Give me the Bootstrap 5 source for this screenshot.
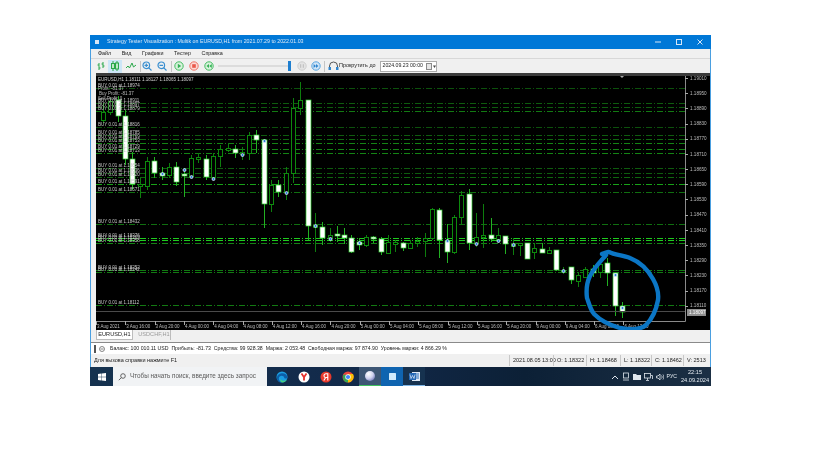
<!DOCTYPE html>
<html lang="ru"><head><meta charset="utf-8"><title>Strategy Tester</title>
<link href="https://cdn.jsdelivr.net/npm/bootstrap@5.3.0/dist/css/bootstrap.min.css" rel="stylesheet">
<style>
body{background:#fff;margin:0;font-family:"Liberation Sans",Arial,sans-serif;color:#222;font-size:5.4px;line-height:1}
.shot{padding:35px 0 0 90px;width:819px;height:460px;overflow:hidden;filter:blur(.35px)}
.mtwin{width:621px;height:332px;background:#f0f0f0;border-left:1px solid #4a9fe0;border-right:1px solid #4a9fe0}
.tbar{height:14px;background:#0078d7;color:#dbe9f7;margin:0 -1px;padding:0 7px 0 5px}
.tbar .ttl{font-size:5.25px}
.tico{width:4px;height:4px;background:#d6e6f6;margin-right:8px}
.wbtn{width:8px;height:8px}
.wgap{margin-left:13px}
.mbar{height:10px;padding-left:7px;gap:10.5px;border-bottom:1px solid #d8d8d8;font-size:5.4px}
.tools{height:14px;padding-left:3px}
.tbtn{width:14px;height:13px;flex:none}
.tbtn.on{background:#cde6f7}
.tbtn.nr{width:12px}
.tsep{width:1px;height:11px;background:#c4c4c4;flex:none}
.m1{margin-left:1px}.m2{margin-left:2px}.m3{margin-left:3px}.m5{margin-left:5px}
.track{width:70px;height:2px;background:#dcdcdc;flex:none}
.thumb{width:3px;height:10px;background:#1f7fd0;flex:none}
.dbox{width:57px;height:11px;background:#fff;border:1px solid #adadad;padding-left:2px;font-size:5.2px;margin-left:4px}
.scrolltxt{font-size:5.45px;white-space:nowrap}
.mchart{display:block;background:#000;margin-left:5px;border-top:3px solid #3b3b3b;width:614px;height:257px;flex:none}
.tabsrow{height:12px;padding-left:5px;gap:5px;font-size:5.6px}
.mtab{height:10px;width:37px;background:#fff;border:1px solid #bcbcbc;border-top:0}
.mtab.off{width:33px;background:#f0f0f0;color:#9a9a9a;border:0;border-right:1px solid #bcbcbc}
.jrow{height:12px;background:#fff;border-top:1px solid #8a8a8a;font-size:5.2px;padding-left:3px;gap:3px}
.jrow .bal{margin-left:2px}
.grip{width:2px;height:8px;background:#555}
.sbar{height:13px;font-size:5.5px;padding-left:3px}
.scell{height:11px;border-left:1px solid #c8c8c8;padding-left:3px;flex:none;white-space:nowrap}
.cw1{width:44px}.cw2{width:33px}.cw3{width:34px}.cw4{width:31px}.cw5{width:32px}.cw6{width:27px}
.tkbar{width:621px;height:19px;background:linear-gradient(90deg,#15324f 0,#12294a 45%,#0c2036 70%,#1b2f44 100%);color:#e6edf3}
.srch{width:154px;height:19px;margin-left:3px;background:#f1f3f5;color:#5a5a5a;font-size:6.35px;padding-left:5px;gap:4px;flex:none;white-space:nowrap}
.tkit{width:22px;height:19px;flex:none}
.tkit.act{background:#3d5674;border-bottom:1px solid #3fbf5f}
.tkit.blu{background:#0f64b0}
.tkit.wrd{background:#16324f;border-bottom:1px solid #7fb6e6}
.wlogo{width:17px;height:19px;margin-left:3px;flex:none}
.tray{gap:3px;font-size:5.2px;padding-right:2px}
.clock{font-size:5.6px;line-height:7.5px;text-align:center;margin-left:1px}
</style></head>
<body>
<div class="shot">
 <div class="mtwin d-flex flex-column">
  <div class="tbar d-flex align-items-center">
   <span class="tico"></span><span class="ttl flex-grow-1">Strategy Tester Visualization : Multik on EURUSD,H1 from 2021.07.29 to 2022.01.03</span>
   <svg class="wbtn" viewBox="0 0 8 8"><path d="M1 4h6" stroke="#d6e6f6"/></svg>
   <svg class="wbtn wgap" viewBox="0 0 8 8"><rect x="1.5" y="1.5" width="5" height="5" fill="none" stroke="#d6e6f6"/></svg>
   <svg class="wbtn wgap" viewBox="0 0 8 8"><path d="M1.500 1.500l5 5M6.500 1.500l-5 5" stroke="#d6e6f6"/></svg>
  </div>
  <div class="mbar d-flex align-items-center"><span>Файл</span><span>Вид</span><span>Графики</span><span>Тестер</span><span>Справка</span></div>
  <div class="tools d-flex align-items-center">
   <span class="tbtn d-flex align-items-center justify-content-center"><svg width="10" height="10" viewBox="0 0 10 10" fill="none" stroke="#2aa84a"><path d="M3 2v7M1.500 4h1.500M3 7h1.500M7 1v6M5.500 3H7M7 5h1.500"/></svg></span>
   <span class="tbtn on d-flex align-items-center justify-content-center"><svg width="10" height="10" viewBox="0 0 10 10" fill="none" stroke="#2aa84a"><path d="M3 0v10M7 0v10"/><rect x="1.500" y="2.500" width="3" height="5" fill="#bfe8c8"/><rect x="5.500" y="2" width="3" height="6" fill="#bfe8c8"/></svg></span>
   <span class="tbtn m2 d-flex align-items-center justify-content-center"><svg width="10" height="8" viewBox="0 0 10 8" fill="none" stroke="#2aa84a"><path d="M0 6l2-2 1.500 2L6 1l1.500 4L10 3"/></svg></span>
   <span class="tsep m2"></span>
   <span class="tbtn nr d-flex align-items-center justify-content-center"><svg width="10" height="10" viewBox="0 0 10 10" fill="none" stroke="#3a8fd0" stroke-width="1.200"><circle cx="4.300" cy="4.300" r="3.300"/><path d="M6.800 6.800L9.500 9.500M2.500 4.300h3.600M4.300 2.500v3.600"/></svg></span>
   <span class="tbtn nr m3 d-flex align-items-center justify-content-center"><svg width="10" height="10" viewBox="0 0 10 10" fill="none" stroke="#3a8fd0" stroke-width="1.200"><circle cx="4.300" cy="4.300" r="3.300"/><path d="M6.800 6.800L9.500 9.500M2.500 4.300h3.600"/></svg></span>
   <span class="tsep m3"></span>
   <span class="tbtn nr m1 d-flex align-items-center justify-content-center"><svg width="10" height="10" viewBox="0 0 10 10"><circle cx="5" cy="5" r="4.200" fill="#d8f2dc" stroke="#45bd62"/><path d="M3.800 2.800v4.400L7.200 5z" fill="#35b156"/></svg></span>
   <span class="tbtn nr m3 d-flex align-items-center justify-content-center"><svg width="10" height="10" viewBox="0 0 10 10"><circle cx="5" cy="5" r="4.200" fill="#fbd8d4" stroke="#ee7468"/><rect x="3.200" y="3.200" width="3.600" height="3.600" fill="#e9584a"/></svg></span>
   <span class="tbtn nr m3 d-flex align-items-center justify-content-center"><svg width="10" height="10" viewBox="0 0 10 10"><circle cx="5" cy="5" r="4.200" fill="#d8f2dc" stroke="#45bd62"/><path d="M5 3v4L2.500 5zM7.800 3v4L5.300 5z" fill="#35b156"/></svg></span>
   <span class="track m3"></span><span class="thumb"></span>
   <span class="tbtn nr m5 d-flex align-items-center justify-content-center"><svg width="10" height="10" viewBox="0 0 10 10"><circle cx="5" cy="5" r="4.200" fill="#e4e4e4" stroke="#cfcfcf"/><path d="M3.700 3.200v3.600M6.300 3.200v3.600" stroke="#bbb"/></svg></span>
   <span class="tbtn nr m2 d-flex align-items-center justify-content-center"><svg width="10" height="10" viewBox="0 0 10 10"><circle cx="5" cy="5" r="4.200" fill="#cfe4f6" stroke="#5aa6e0"/><path d="M2.600 3v4L5 5zM5 3v4L7.400 5z" fill="#2f86cf"/></svg></span>
   <span class="tsep m2"></span>
   <svg class="m3 flex-shrink-0" width="11" height="10" viewBox="0 0 11 10" fill="none"><path d="M1.500 7V5a4 4 0 0 1 8 0v2" stroke="#555"/><rect x=".5" y="6" width="2.500" height="3" fill="#2f86cf"/><rect x="8" y="6" width="2.500" height="3" fill="#2f86cf"/></svg>
   <span class="scrolltxt">Прокрутить до</span>
   <span class="dbox d-flex align-items-center"><span class="flex-grow-1">2024.09.23 00:00</span>
    <svg width="10" height="7" viewBox="0 0 10 7"><rect x=".5" y=".5" width="5" height="6" fill="#e6e6e6" stroke="#8a8a8a"/><path d="M7 2.500h3L8.500 5z" fill="#444"/></svg></span>
  </div>
  <svg class="mchart" id="chart" viewBox="96 76 614 254" font-family="Liberation Sans, Arial, sans-serif"></svg>
  <div class="tabsrow d-flex align-items-start"><span class="mtab d-flex align-items-center justify-content-center">EURUSD,H1</span><span class="mtab off d-flex align-items-center justify-content-center">USDCHF,H1</span></div>
  <div class="jrow d-flex align-items-center"><span class="grip"></span>
   <svg width="6" height="6" viewBox="0 0 6 6" fill="none" stroke="#555" stroke-width=".7"><circle cx="3" cy="3" r="2.500"/><path d="M1.500 3h3"/></svg>
   <span class="bal">Баланс: 100 010.11 USD&nbsp; Прибыль: -81.73&nbsp; Средства: 99 928.38&nbsp; Маржа: 2 053.48&nbsp; Свободная маржа: 97 874.90&nbsp; Уровень маржи: 4 866.29 %</span></div>
  <div class="sbar d-flex align-items-center"><span class="flex-grow-1">Для вызова справки нажмите F1</span>
   <span class="scell d-flex align-items-center cw1">2021.08.05 13:00</span><span class="scell d-flex align-items-center cw2">O: 1.18322</span><span class="scell d-flex align-items-center cw3">H: 1.18468</span><span class="scell d-flex align-items-center cw4">L: 1.18322</span><span class="scell d-flex align-items-center cw5">C: 1.18462</span><span class="scell d-flex align-items-center cw6">V: 2513</span></div>
 </div>
 <div class="tkbar d-flex align-items-center">
  <span class="wlogo d-flex align-items-center justify-content-center"><svg width="8" height="8" viewBox="0 0 8 8" fill="#fff"><path d="M0 1.100l3.400-.5v3.200H0zM3.800.5L8 0v3.800H3.800zM0 4.200h3.400v3.200L0 6.900zM3.800 4.200H8V8l-4.200-.6z"/></svg></span>
  <div class="srch d-flex align-items-center"><svg width="8" height="8" viewBox="0 0 8 8" fill="none" stroke="#444" stroke-width=".8"><circle cx="5" cy="3" r="2.300"/><path d="M3.300 4.700L.8 7.200"/></svg><span>Чтобы начать поиск, введите здесь запрос</span></div>
  <span class="tkit ms-1 d-flex align-items-center justify-content-center"><svg width="12" height="12" viewBox="0 0 12 12"><circle cx="6" cy="6" r="5.500" fill="#1b9de2"/><path d="M.8 7A5.500 5.500 0 0 1 11.500 6c0 1.500-2 2-3 1.200C8 4 3 3.800 2.800 7.500 2.700 9.500 4.500 11 6 11.500 3 11.500 1 9.500.8 7z" fill="#0c5ea8"/><path d="M4 8c1.500 2 4.500 2.500 7 .5-1 2-3 3-5 3-1.200-.6-2-2-2-3.500z" fill="#47d17a"/></svg></span>
  <span class="tkit d-flex align-items-center justify-content-center"><svg width="12" height="12" viewBox="0 0 12 12"><circle cx="6" cy="6" r="5.500" fill="#fff"/><path d="M3.500 2.500L6 6.200l2.500-3.700M6 6v3.500" fill="none" stroke="#e5322d" stroke-width="1.800"/></svg></span>
  <span class="tkit d-flex align-items-center justify-content-center"><svg width="12" height="12" viewBox="0 0 12 12"><circle cx="6" cy="6" r="5.500" fill="#e8392c"/><path d="M7.800 9.500V2.700H6.200C4.800 2.700 4 3.500 4 4.700c0 1 .6 1.700 1.500 2L3.800 9.500M7.800 6.500H6" fill="none" stroke="#fff" stroke-width="1.100"/></svg></span>
  <span class="tkit d-flex align-items-center justify-content-center"><svg width="12" height="12" viewBox="0 0 12 12"><circle cx="6" cy="6" r="5.500" fill="#e8453c"/><path d="M6 6L1.200 8.800A5.500 5.500 0 0 0 6 11.500z" fill="#34a853"/><path d="M6 6l4.800 2.800A5.500 5.500 0 0 1 6 11.500zM6 3h5a5.500 5.500 0 0 1-.2 5.800L6 6z" fill="#fbbc05"/><path d="M1.200 8.800L6 6 3.500 3.500 1 4z" fill="#34a853"/><circle cx="6" cy="6" r="2.700" fill="#fff"/><circle cx="6" cy="6" r="2.100" fill="#4285f4"/></svg></span>
  <span class="tkit act d-flex align-items-center justify-content-center"><svg width="12" height="12" viewBox="0 0 12 12"><defs><radialGradient id="sph" cx=".35" cy=".3" r=".8"><stop offset="0" stop-color="#fff"/><stop offset=".55" stop-color="#cfd2ee"/><stop offset="1" stop-color="#6f74b8"/></radialGradient></defs><circle cx="6" cy="6" r="5" fill="url(#sph)"/></svg></span>
  <span class="tkit blu d-flex align-items-center justify-content-center"><svg width="7" height="7" viewBox="0 0 7 7"><rect width="7" height="7" rx=".6" fill="#cfeafc"/></svg></span>
  <span class="tkit wrd d-flex align-items-center justify-content-center"><svg width="11" height="11" viewBox="0 0 11 11"><rect x="3" y="1" width="8" height="9" fill="#dfe9f5"/><path d="M6 3h4M6 5h4M6 7h4" stroke="#2b6fb8"/><rect y="2" width="7" height="7" fill="#2468b5"/><path d="M1 3.500l1 4 1.500-3 1.500 3 1-4" fill="none" stroke="#fff" stroke-width=".6"/></svg></span>
  <span class="flex-grow-1"></span>
  <div class="tray d-flex align-items-center">
   <svg width="8" height="6" viewBox="0 0 8 6" fill="none" stroke="#dfe6ee"><path d="M1 5l3-3 3 3"/></svg>
   <svg width="8" height="9" viewBox="0 0 8 9" fill="none" stroke="#dfe6ee" stroke-width=".8"><rect x="1.500" y="1" width="5" height="5"/><path d="M1 8h6"/></svg>
   <svg width="8" height="7" viewBox="0 0 8 7" fill="#dfe6ee"><path d="M0 1h3l1 1h4v5H0z"/></svg>
   <svg width="9" height="8" viewBox="0 0 9 8" fill="none" stroke="#dfe6ee" stroke-width=".8"><rect x=".5" y=".5" width="6" height="4.500"/><path d="M3.500 5v2M2 7.500h3M7 2.500h1.500V6"/></svg>
   <svg width="8" height="8" viewBox="0 0 8 8" fill="none" stroke="#dfe6ee" stroke-width=".8"><path d="M.5 3h1.500l2-2v6l-2-2H.5zM5.500 2.500c.8 1 .8 2 0 3M7 1.500c1.200 1.500 1.200 3.500 0 5"/></svg>
   <span>РУС</span>
   <div class="clock">22:15<br>24.09.2024</div>
  </div>
 </div>
</div>
<script src="https://cdn.jsdelivr.net/npm/bootstrap@5.3.0/dist/js/bootstrap.bundle.min.js"></script>
<script>
// x, wickTop, wickBottom, bodyTop, bodyBottom, kind (w = white body, o = outline)
var candles=[[103,103,123,112,120,'o'],[110,98,115,101,112,'o'],[118,96,122,100,116,'w'],[125,110,165,116,159,'w'],[132,152,190,159,184,'w'],[140,178,198,184,186,'o'],[147,157,190,161,186,'o'],[154,157,178,161,173,'w'],[162,167,180,173,176,'w'],[169,163,178,167,175,'o'],[176,162,186,167,182,'w'],[184,168,197,174,176,'w'],[191,155,178,158,176,'o'],[198,153,163,157,159,'o'],[206,155,180,159,177,'w'],[213,153,180,156,177,'o'],[220,145,167,149,156,'o'],[228,143,152,148,150,'o'],[235,145,158,149,153,'w'],[242,147,160,152,154,'o'],[249,132,160,135,153,'o'],[256,130,153,135,140,'w'],[264,140,228,140,204,'w'],[271,180,212,185,204,'o'],[278,180,197,185,192,'w'],[286,167,200,173,192,'o'],[293,98,183,108,173,'o'],[300,82,115,100,108,'o'],[308,100,240,100,226,'w'],[315,213,252,225,227,'o'],[322,222,245,227,238,'w'],[330,228,242,235,238,'o'],[337,226,242,234,236,'w'],[344,228,244,235,238,'w'],[351,235,253,238,252,'w'],[359,238,250,242,245,'w'],[366,235,247,237,245,'o'],[373,236,243,237,239,'w'],[381,237,255,239,252,'w'],[388,235,254,242,253,'o'],[395,240,252,242,244,'o'],[403,242,251,243,248,'w'],[410,240,249,243,248,'o'],[417,237,247,241,243,'o'],[425,233,257,238,241,'o'],[432,208,240,209,238,'o'],[439,208,258,210,240,'w'],[447,224,263,241,252,'w'],[454,215,254,217,252,'o'],[461,191,225,195,217,'o'],[469,189,250,194,243,'w'],[476,213,247,237,243,'o'],[483,204,248,235,237,'o'],[491,218,242,235,239,'w'],[498,228,243,235,239,'o'],[505,236,254,236,244,'w'],[513,238,255,244,246,'o'],[520,243,256,243,245,'o'],[527,243,259,243,259,'w'],[534,243,259,248,252,'o'],[542,243,253,249,253,'w'],[549,247,254,250,253,'o'],[556,250,271,250,270,'w'],[563,267,274,270,272,'o'],[571,267,284,267,280,'w'],[578,272,287,275,281,'o'],[585,267,278,269,277,'o'],[593,265,277,269,273,'w'],[600,258,278,264,272,'o'],[607,258,286,263,273,'w'],[615,273,316,273,306,'w'],[622,302,318,306,312,'w']];
var markers=[[162,174],[184,170],[191,177],[213,179],[242,155],[264,141],[286,193],[315,226],[330,239],[359,243],[447,241],[476,244],[498,241],[513,245],[563,271],[615,275],[622,308]];
// y, opacity, label
var lines=[[88,.4,'1.18974'],[103,.45,'1.18911'],[107,.45,'1.18897'],[111,.6,'1.18879'],[127,.4,'1.18816'],[135,.45,'1.18785'],[139,.5,'1.18769'],[143,.65,'1.18753'],[149,.65,'1.18729'],[153,.65,'1.18713'],[168,.45,'1.18654'],[173,.45,'1.18636'],[177,.5,'1.18620'],[184,.8,'1.18591'],[192,.55,'1.18571'],[224,.55,'1.18432'],[238,1,'1.18376'],[240,1,'1.18369'],[243,.65,'1.18358'],[270,.6,'1.18252'],[272,.6,'1.18242'],[305,.6,'1.18112']];
var days=['3 Aug 2021','3 Aug 16:00','3 Aug 20:00','4 Aug 00:00','4 Aug 04:00','4 Aug 08:00','4 Aug 12:00','4 Aug 16:00','4 Aug 20:00','5 Aug 00:00','5 Aug 04:00','5 Aug 08:00','5 Aug 12:00','5 Aug 16:00','5 Aug 20:00','6 Aug 00:00','6 Aug 04:00','6 Aug 08:00','6 Aug 12:00'];
var s='';
function t(x,y,c,f,str){return '<text x="'+x+'" y="'+y+'" fill="'+f+'" font-size="'+c+'">'+str+'</text>';}
lines.forEach(function(l){s+='<path d="M96 '+(l[0]+.5)+'H685" stroke="#1ecb1e" stroke-opacity="'+l[1]+'" stroke-dasharray="6 2 1 2"/>';});
candles.forEach(function(c){var x=c[0]+.5,w=c[5]=='w',col=w?'#22b022':'#0d7d0d';
 s+='<path d="M'+x+' '+c[1]+'V'+c[2]+'" stroke="'+col+'"/>';
 if(w) s+='<rect x="'+(x-2.5)+'" y="'+c[3]+'" width="5" height="'+Math.max(1,c[4]-c[3])+'" fill="#fff" stroke="#2fd02f" stroke-width=".7"/>';
 else s+='<rect x="'+(x-2)+'" y="'+(c[3]+.5)+'" width="4" height="'+Math.max(1,c[4]-c[3])+'" fill="#000" stroke="#0d8a0d"/>';});
markers.forEach(function(m){s+='<circle cx="'+(m[0]+.5)+'" cy="'+m[1]+'" r="1.500" fill="#2f7fd6" stroke="#dcebfa" stroke-width=".8"/>';});
s+=t(98,81,4.5,'#d0d0d0','EURUSD,H1 1.18111 1.18127 1.18065 1.18097');
s+=t(98,90,4.5,'#bdbdbd','Profit: -81.37')+t(99,95,4.5,'#bdbdbd','Buy Profit: -81.37')+t(98,100,4.5,'#bdbdbd','Sell Profit: 0');
lines.forEach(function(l){s+=t(98,l[0]-1,4.5,'#c8c8c8','BUY 0.01 at '+l[2]);});
s+='<path d="M96 311.500H685" stroke="#4a4a4a"/><path d="M96 321.500H685.500V76" stroke="#8a8a8a" fill="none"/>';
for(var i=0;i<16;i++){var y=78+i*15.18,p=(1.1901-i*.0006).toFixed(5);s+='<path d="M685 '+(Math.round(y)+.5)+'h3" stroke="#aaa"/>'+t(690,y+1.7,4.6,'#bdbdbd',p);}
days.forEach(function(d,i){var x=i==0?96:96+i*29.3;s+='<path d="M'+(Math.round(x)+.5)+' 321v4" stroke="#aaa"/>'+t(x+1,327.5,4.5,'#bdbdbd',d);});
s+='<rect x="687" y="309" width="19" height="7" fill="#8f8f8f"/>'+t(689,314.300,4.6,'#fff','1.18097');
s+='<path d="M620 76h4l-2 2z" fill="#aaa"/>';
s+='<path d="M602 254C606 253 608 251 609 252C615 255 623 255 630 258C640 262 648 270 653 279C657 286 659 292 658 300C656 311 651 320 646 325C640 330 630 330 620 328C609 325 600 320 594 314C590 309 589 303 587 298C586 290 586 284 590 276C594 268 600 262 606 255" fill="none" stroke="#0b76c5" stroke-width="4.400" stroke-linecap="round" stroke-linejoin="round"/>';
document.getElementById('chart').innerHTML=s;
</script>
</body></html>
